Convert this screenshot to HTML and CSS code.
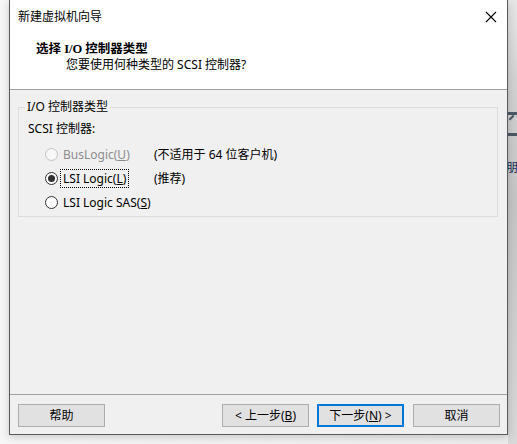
FILE: index.html
```html
<!DOCTYPE html>
<html lang="zh-CN">
<head>
<meta charset="utf-8">
<title>新建虚拟机向导</title>
<link rel="stylesheet" href="styles.css">
</head>
<body>
<div class="screen">
  <div class="left-gap"></div>
  <div class="window">
    <div class="header">
      <div class="titlebar">
        <span class="title">新建虚拟机向导</span>
        <svg class="close" width="12" height="12" viewBox="0 0 12 12"><path d="M1 1 L11 11 M11 1 L1 11" stroke="#000" stroke-width="1.1" fill="none"/></svg>
      </div>
      <div class="heading">选择 I/O 控制器类型</div>
      <div class="subheading">您要使用何种类型的 SCSI 控制器?</div>
    </div>
    <div class="body">
      <fieldset class="group">
        <legend class="group-label">I/O 控制器类型</legend>
        <div class="group-content">
          <div class="field-label">SCSI 控制器:</div>
          <div class="options">
            <div class="opt disabled"><span class="radio"></span><span class="opt-text">BusLogic(<u>U</u>)</span></div>
            <div class="note">(不适用于 64 位客户机)</div>
            <div class="opt"><span class="radio checked"></span><span class="opt-text focus">LSI Logic(<u>L</u>)</span></div>
            <div class="note">(推荐)</div>
            <div class="opt"><span class="radio"></span><span class="opt-text">LSI Logic SAS(<u>S</u>)</span></div>
            <div class="note"></div>
          </div>
        </div>
      </fieldset>
    </div>
    <div class="footer">
      <button class="btn">帮助</button>
      <div class="spacer"></div>
      <button class="btn">&lt; 上一步(<u>B</u>)</button>
      <button class="btn primary">下一步(<u>N</u>) &gt;</button>
      <button class="btn cancel">取消</button>
    </div>
  </div>
  <div class="right-strip">
    <div class="bar bar1"></div>
    <div class="mark"></div>
    <div class="bar bar2"></div>
    <div class="glyph">朋</div>
  </div>
</div>
</body>
</html>
```

FILE: styles.css
```css
* { box-sizing: border-box; }
html, body { margin: 0; padding: 0; }
body {
  width: 517px;
  height: 444px;
  overflow: hidden;
  background: #eeeeee;
  font-family: "Noto Sans", "Noto Sans CJK SC", sans-serif;
  font-size: 12px;
  color: #000;
}
.screen {
  display: flex;
  height: 444px;
  background: linear-gradient(to right, #f6f6f6, #ececec);
}
.left-gap { width: 9px; flex: none; }
.window {
  width: 499px;
  height: 435px;
  flex: none;
  display: flex;
  flex-direction: column;
  background: #f0f0f0;
  border-left: 1px solid #5a5a5a;
  border-right: 1px solid #5a5a5a;
  border-bottom: 1px solid #5a5a5a;
  box-shadow: 0 2px 8px rgba(0,0,0,0.18);
  position: relative;
  z-index: 1;
}
.header {
  background: #fff;
  height: 90px;
  border-bottom: 1px solid #a0a0a0;
  flex: none;
}
.titlebar {
  height: 34px;
  display: flex;
  align-items: center;
  padding-left: 8px;
  padding-right: 10px;
}
.title { flex: 1; line-height: 16px; }
.close { display: block; margin-right: 0; }
.heading {
  margin-top: 7px;
  padding-left: 26px;
  line-height: 16px;
  font-weight: 700;
  font-family: "Liberation Serif", "Noto Sans CJK SC", serif;
  font-size: 12.5px;
}
.subheading {
  padding-left: 56px;
  line-height: 16px;
}
.body { flex: 1; padding: 9px 9px 0 8px; }
.group {
  margin: 0;
  padding: 0 0 2px 0;
  border: 1px solid #dcdcdc;
  min-width: 0;
}
.group-label {
  margin-left: 6px;
  padding: 0 2px;
  line-height: 16px;
}
.group-content { padding-left: 9px; }
.field-label { margin-top: 6px; line-height: 16px; }
.options {
  margin-top: 5px;
  display: grid;
  grid-template-columns: 109px 1fr;
  grid-auto-rows: 24px;
  padding-left: 17px;
}
.opt { display: flex; align-items: center; }
.note { display: flex; align-items: center; }
.radio {
  width: 13px;
  height: 13px;
  border-radius: 50%;
  border: 1px solid #333;
  background: #fff;
  flex: none;
  display: flex;
  align-items: center;
  justify-content: center;
}
.radio.checked::after {
  content: "";
  width: 7px;
  height: 7px;
  border-radius: 50%;
  background: #333;
}
.opt-text {
  margin-left: 2px;
  padding: 0 2px;
  line-height: 17px;
  border: 1px dotted transparent;
}
.opt-text.focus { border-color: #000; }
.disabled .radio { border-color: #c2c2c2; background: #f7f7f7; }
.disabled .opt-text { color: #8c8c8c; }
.footer {
  flex: none;
  border-top: 1px solid #a0a0a0;
  display: flex;
  padding: 9px 7px 7px 8px;
}
.spacer { flex: 1; }
.btn {
  width: 87px;
  height: 23px;
  padding: 0;
  background: #e1e1e1;
  border: 1px solid #adadad;
  font: inherit;
  color: #000;
  line-height: 20px;
}
.btn.primary { margin-left: 8px; border: 2px solid #0078d7; }
.btn.cancel { margin-left: 9px; }
.right-strip {
  flex: 1;
  position: relative;
  background: linear-gradient(to bottom, #e6e6e6 0, #d2d2d2 80px, #c4c4c4 200px, #d8d8d8 444px);
}
.bar { position: absolute; left: 0; right: 0; height: 3px; background: #4b5966; }
.bar1 { top: 112px; }
.bar2 { top: 133px; }
.mark {
  position: absolute;
  left: 2px;
  top: 116px;
  width: 6px;
  height: 6px;
  border-left: 2px solid #4b5966;
  transform: rotate(45deg);
}
.glyph {
  position: absolute;
  left: -2px;
  top: 160px;
  font-size: 12px;
  line-height: 16px;
  color: #1a2a55;
}
```
